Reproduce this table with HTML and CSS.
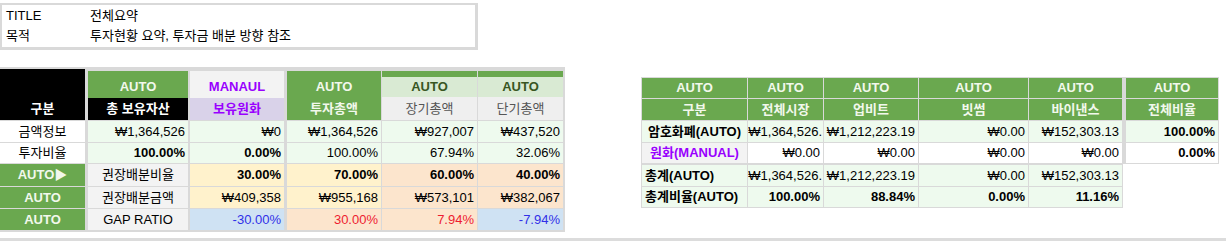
FILE: index.html
```html
<!DOCTYPE html>
<html lang="ko">
<head>
<meta charset="utf-8">
<title>전체요약</title>
<link rel="stylesheet" href="styles.css">
</head>
<body>
<div class="sheet">
  <section class="meta">
    <div class="meta-row"><span class="meta-key">TITLE</span><span>전체요약</span></div>
    <div class="meta-row"><span class="meta-key">목적</span><span>투자현황 요약, 투자금 배분 방향 참조</span></div>
  </section>

  <div class="tables">
    <div class="ltable">
      <div class="hd-corner">구분</div>
      <div class="hd-stack"><div class="hd-top green">AUTO</div><div class="hd-bot black">총 보유자산</div></div>
      <div class="hd-stack"><div class="hd-top manual">MANAUL</div><div class="hd-bot lavender">보유원화</div></div>
      <div class="hd-stack green"><div class="hd-top">AUTO</div><div class="hd-bot">투자총액</div></div>
      <div class="hd-stack sub"><div class="hd-top lightgreen">AUTO</div><div class="hd-bot soft">장기총액</div></div>
      <div class="hd-stack sub"><div class="hd-top lightgreen">AUTO</div><div class="hd-bot soft">단기총액</div></div>

      <div class="cell ctr white">금액정보</div>
      <div class="cell num mint">₩1,364,526</div>
      <div class="cell num mint">₩0</div>
      <div class="cell num mint">₩1,364,526</div>
      <div class="cell num mint">₩927,007</div>
      <div class="cell num mint">₩437,520</div>

      <div class="cell ctr white">투자비율</div>
      <div class="cell num mint b">100.00%</div>
      <div class="cell num mint b">0.00%</div>
      <div class="cell num mint">100.00%</div>
      <div class="cell num mint">67.94%</div>
      <div class="cell num mint">32.06%</div>

      <div class="cell ctr tag">AUTO▶</div>
      <div class="cell ctr label">권장배분비율</div>
      <div class="cell num cream b">30.00%</div>
      <div class="cell num cream b">70.00%</div>
      <div class="cell num peach b">60.00%</div>
      <div class="cell num peach b">40.00%</div>

      <div class="cell ctr tag">AUTO</div>
      <div class="cell ctr label">권장배분금액</div>
      <div class="cell num cream">₩409,358</div>
      <div class="cell num cream">₩955,168</div>
      <div class="cell num peach">₩573,101</div>
      <div class="cell num peach">₩382,067</div>

      <div class="cell ctr tag">AUTO</div>
      <div class="cell ctr label">GAP RATIO</div>
      <div class="cell num sky neg">-30.00%</div>
      <div class="cell num peach pos">30.00%</div>
      <div class="cell num peach pos">7.94%</div>
      <div class="cell num sky neg">-7.94%</div>
    </div>

    <div class="rtable">
      <div class="rmain">
        <div class="cell ctr rhd">AUTO</div>
        <div class="cell ctr rhd">AUTO</div>
        <div class="cell ctr rhd">AUTO</div>
        <div class="cell ctr rhd">AUTO</div>
        <div class="cell ctr rhd">AUTO</div>
        <div class="cell ctr rhd">AUTO</div>

        <div class="cell ctr rhd">구분</div>
        <div class="cell ctr rhd">전체시장</div>
        <div class="cell ctr rhd">업비트</div>
        <div class="cell ctr rhd">빗썸</div>
        <div class="cell ctr rhd">바이낸스</div>
        <div class="cell ctr rhd">전체비율</div>

        <div class="cell ctr mint b">암호화폐(AUTO)</div>
        <div class="cell num mint clip">₩1,364,526.</div>
        <div class="cell num mint">₩1,212,223.19</div>
        <div class="cell num mint">₩0.00</div>
        <div class="cell num mint">₩152,303.13</div>
        <div class="cell num mint b">100.00%</div>

        <div class="cell ctr label purple b">원화(MANUAL)</div>
        <div class="cell num white">₩0.00</div>
        <div class="cell num white">₩0.00</div>
        <div class="cell num white">₩0.00</div>
        <div class="cell num white">₩0.00</div>
        <div class="cell num white b">0.00%</div>
      </div>
      <div class="rtotal">
        <div class="cell mint b">총계(AUTO)</div>
        <div class="cell num mint clip">₩1,364,526.</div>
        <div class="cell num mint">₩1,212,223.19</div>
        <div class="cell num mint">₩0.00</div>
        <div class="cell num mint">₩152,303.13</div>

        <div class="cell mint b">총계비율(AUTO)</div>
        <div class="cell num mint b">100.00%</div>
        <div class="cell num mint b">88.84%</div>
        <div class="cell num mint b">0.00%</div>
        <div class="cell num mint b">11.16%</div>
      </div>
    </div>
  </div>

  <div class="rule"></div>
</div>
</body>
</html>
```

FILE: styles.css
```css
html, body {
  margin: 0;
  padding: 0;
  background: #ffffff;
}

body {
  width: 1226px;
  height: 250px;
  overflow: hidden;
  font-family: "Liberation Sans", "Noto Sans CJK KR", sans-serif;
  font-size: 13px;
  color: #000000;
}

.sheet {
  display: flex;
  flex-direction: column;
  padding-top: 3px;
}

/* ---------- meta block ---------- */
.meta {
  width: 478px;
  box-sizing: border-box;
  border: 3px solid #d9d9d9;
  border-top-width: 2px;
  border-left-width: 2px;
  padding: 0 0 1px 0;
}

.meta-row {
  display: flex;
  align-items: center;
  height: 20px;
  line-height: 20px;
  padding-left: 4px;
}

.meta-row:first-child {
  height: 21px;
}

.meta-key {
  width: 84px;
}

/* ---------- table row ---------- */
.tables {
  display: flex;
  align-items: flex-start;
  gap: 76px;
  margin-top: 17px;
}

.cell {
  display: flex;
  align-items: center;
  padding: 0 3px;
  white-space: nowrap;
  overflow: hidden;
  line-height: 16px;
}

.ctr { justify-content: center; }
.num { justify-content: flex-end; }
.b { font-weight: bold; }

.white { background: #ffffff; }
.mint { background: #eefaee; }
.label { background: #f3f3f3; }
.cream { background: #fff2cc; }
.peach { background: #fce5cd; }
.sky { background: #cfe2f3; }
.neg { color: #3030e8; }
.pos { color: #ee1c30; }
.purple { color: #9900ff; }

.tag {
  background: #6aa84f;
  color: #f2f8ec;
  font-weight: bold;
}

/* ---------- left table ---------- */
.ltable {
  display: grid;
  grid-template-columns: 85px 102px 95px 96px 95px 85px;
  grid-template-rows: 51px 21px 20px 22px 21px 21px;
  gap: 1px;
  padding: 2px 2px 2px 0;
  background: #d9d9d9;
}

.ltable > :nth-child(6n+2) { margin-left: 2px; }
.ltable > :nth-child(6n+3) { margin-left: 1px; }
.ltable > :nth-child(6n+4) { margin-left: 2px; }

.hd-corner {
  background: #000000;
  color: #ffffff;
  font-weight: bold;
  display: flex;
  align-items: flex-end;
  justify-content: center;
  padding-bottom: 3px;
  line-height: 16px;
}

.hd-stack {
  display: flex;
  flex-direction: column;
  margin-top: 2px;
  font-weight: bold;
  line-height: 16px;
}

.hd-top {
  height: 27px;
  box-sizing: border-box;
  display: flex;
  align-items: flex-end;
  justify-content: center;
  padding-bottom: 3px;
}

.hd-bot {
  flex: 1;
  display: flex;
  align-items: center;
  justify-content: center;
}

.green {
  background: #6aa84f;
  color: #f2f8ec;
}

.black {
  background: #000000;
  color: #ffffff;
}

.manual {
  background: #f3f3f3;
  color: #9900ff;
}

.lavender {
  background: #d9d2e9;
  color: #9900ff;
}

.sub {
  border-top: 6px solid #6aa84f;
}

.sub .hd-top {
  height: 20px;
  padding-bottom: 2px;
}

.lightgreen {
  background: #d9ead3;
  color: #38561f;
}

.soft {
  background: #efefef;
  color: #555555;
  font-weight: normal;
}

/* ---------- right table ---------- */
.rtable {
  display: flex;
  flex-direction: column;
  align-items: flex-start;
  margin-top: 10px;
}

.rmain {
  display: grid;
  grid-template-columns: 105px 75px 94px 109px 93px 95px;
  grid-template-rows: 20px 21px 21px 20px;
  gap: 1px;
  padding: 1px;
  background: #d9d9d9;
}

.rmain > :nth-child(6n) { margin-left: 3px; }

.rtotal {
  display: grid;
  grid-template-columns: 105px 75px 94px 109px 93px;
  grid-template-rows: 21px 20px;
  gap: 1px;
  padding: 1px;
  background: #d9d9d9;
}

.rhd {
  background: #6aa84f;
  color: #f2f8ec;
  font-weight: bold;
}

.clip {
  padding-right: 1px;
}

/* ---------- bottom rule ---------- */
.rule {
  margin-top: 6px;
  height: 3px;
  width: 1226px;
  background: #dcdcdc;
}
```
